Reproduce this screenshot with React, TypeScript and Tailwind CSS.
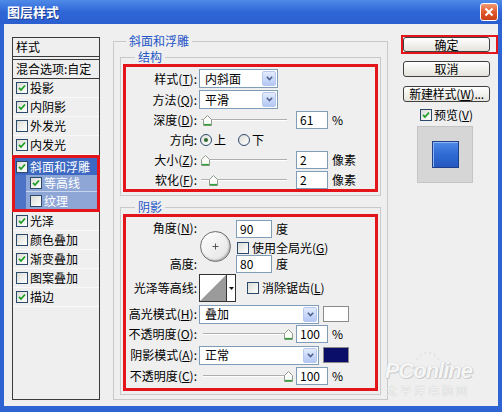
import React from 'react';

type Kid = { children?: React.ReactNode };

const Lbl = ({ t, k, colon = true }: { t: string; k?: string; colon?: boolean }) => (
  <span className="whitespace-nowrap">
    {t}
    {k && (
      <>
        (<span className="underline">{k}</span>)
      </>
    )}
    {colon && ':'}
  </span>
);

const Check = ({ on }: { on?: boolean }) => (
  <span className="flex h-[12px] w-[12px] shrink-0 items-center justify-center border border-[#2b4a6b] bg-linear-to-br from-[#dcdcd6] to-white">
    {on && (
      <svg width="8" height="8" viewBox="0 0 8 8">
        <path d="M1 3.8 L3 6 L7 1.5" stroke="#1f9e26" strokeWidth="1.8" fill="none" />
      </svg>
    )}
  </span>
);

const Radio = ({ on }: { on?: boolean }) => (
  <span className="flex h-[12px] w-[12px] shrink-0 items-center justify-center rounded-full border border-[#2b4a6b] bg-linear-to-br from-[#dcdcd6] to-white">
    {on && <span className="h-[4px] w-[4px] rounded-full bg-[#2d6a2d]" />}
  </span>
);

const Select = ({ value, w }: { value: string; w: string }) => (
  <div className={`flex h-[19px] ${w} items-center border border-[#7f9db9] bg-white`}>
    <span className="flex-1 pl-[5px]">{value}</span>
    <span className="mr-px flex h-[15px] w-[14px] items-center justify-center rounded-[2px] border border-[#b7c8ee] bg-linear-to-b from-[#e3ebfd] to-[#b4c8f4]">
      <svg width="7" height="5" viewBox="0 0 7 5">
        <path d="M0.8 0.8 L3.5 3.6 L6.2 0.8" stroke="#4a5f8c" strokeWidth="1.5" fill="none" />
      </svg>
    </span>
  </div>
);

const Field = ({ v, w = 'w-[32px]' }: { v: string; w?: string }) => (
  <div className={`flex h-[18px] ${w} shrink-0 items-center border border-[#7f9db9] bg-white pl-[3px]`}>{v}</div>
);

const Thumb = () => (
  <svg width="9" height="11" viewBox="0 0 9 11">
    <path d="M0.5 10.5 V4.5 L4.5 0.5 L8.5 4.5 V10.5 Z" fill="#fbfbf8" stroke="#8e9a8e" />
    <path d="M1 9.6 H8" stroke="#2ea236" strokeWidth="1.4" />
  </svg>
);

const Slider = ({ w, pos }: { w: string; pos: string }) => (
  <div className={`relative h-[18px] ${w} shrink-0`}>
    <div className="absolute inset-x-0 top-[8px] h-[2px] border-t border-b border-t-[#aeb0b0] border-b-white" />
    <div className={`absolute top-[4px] ${pos}`}>
      <Thumb />
    </div>
  </div>
);

const Row = ({ label, className = '', children }: { label: React.ReactNode; className?: string } & Kid) => (
  <div className={`flex items-center ${className}`}>
    <div className="w-[71px] shrink-0 text-right">{label}</div>
    {children}
  </div>
);

const Btn = ({ children }: Kid) => (
  <div className="flex h-[16px] w-[87px] items-center justify-center rounded-[3px] border border-[#404040] bg-linear-to-b from-white to-[#e4e3dc]">
    {children}
  </div>
);

const Item = ({ label, on }: { label: string; on?: boolean }) => (
  <div className="flex h-[19px] items-center gap-[2px] border-b border-[#fafafa] pl-[3px]">
    <Check on={on} />
    <span>{label}</span>
  </div>
);

const StyleList = () => (
  <div className="mt-[3px] flex h-[363px] w-[88px] shrink-0 flex-col border border-[#3a3a3a] bg-[#efefef]">
    <div className="flex h-[19px] items-center border-b border-[#3a3a3a] pl-[3px]">样式</div>
    <div className="mt-[2px] flex h-[20px] items-center border-y border-[#3a3a3a] pl-[3px]">混合选项:自定</div>
    <Item label="投影" on />
    <Item label="内阴影" on />
    <Item label="外发光" />
    <Item label="内发光" on />
    <div className="-mx-px border-[3px] border-[#e3151b]">
      <div className="flex h-[17px] items-center gap-[2px] bg-[#3d69c2] pl-px text-white">
        <Check on />
        <span>斜面和浮雕</span>
      </div>
      <div className="flex h-[17px] bg-[#4c73c6]">
        <div className="ml-[11px] flex flex-1 items-center gap-[2px] border-b border-[#c9d5ee] bg-[#8ea6d6] pl-[4px] text-white">
          <Check on />
          <span>等高线</span>
        </div>
      </div>
      <div className="flex h-[17px] bg-[#4c73c6]">
        <div className="ml-[11px] flex flex-1 items-center gap-[2px] bg-[#8ea6d6] pl-[4px] text-white">
          <Check />
          <span>纹理</span>
        </div>
      </div>
    </div>
    <Item label="光泽" on />
    <Item label="颜色叠加" />
    <Item label="渐变叠加" on />
    <Item label="图案叠加" />
    <Item label="描边" on />
  </div>
);

const Dial = () => (
  <div className="flex h-[31px] w-[31px] shrink-0 items-center justify-center rounded-full border border-[#707070] bg-linear-to-br from-white to-[#e2e2e2] shadow-[inset_-1px_-1px_2px_#a8a8a8]">
    <svg width="7" height="7" viewBox="0 0 7 7">
      <path d="M3.5 0.5 V6.5 M0.5 3.5 H6.5" stroke="#555" strokeWidth="1" />
    </svg>
  </div>
);

const Contour = () => (
  <div className="flex h-[28px] w-[37px] shrink-0 border border-[#333] bg-white">
    <svg width="26" height="26" viewBox="0 0 26 26">
      <path d="M0 26 L26 0 V26 Z" fill="#9b9b9b" />
    </svg>
    <div className="flex flex-1 items-center justify-center border-l border-[#333]">
      <svg width="5" height="3" viewBox="0 0 5 3">
        <path d="M0 0 H5 L2.5 3 Z" fill="#111" />
      </svg>
    </div>
  </div>
);

const Structure = () => (
  <fieldset className="mx-[6px] mt-[2px] border border-[#c9c9c9] pb-[3px]">
    <legend className="ml-[14px] px-[3px] leading-[14px] text-[#2456c6]">结构</legend>
    <div className="mx-[2px] flex flex-col gap-[2px] border-[3px] border-[#e3151b] pt-[2px]">
      <Row label={<Lbl t="样式" k="T" />} className="h-[19px]">
        <div className="ml-[2px]">
          <Select value="内斜面" w="w-[79px]" />
        </div>
      </Row>
      <Row label={<Lbl t="方法" k="Q" />} className="h-[19px]">
        <div className="ml-[2px]">
          <Select value="平滑" w="w-[79px]" />
        </div>
      </Row>
      <Row label={<Lbl t="深度" k="D" />} className="h-[18px]">
        <div className="ml-[4px] flex items-center">
          <Slider w="w-[86px]" pos="left-[2px]" />
          <div className="ml-[9px]">
            <Field v="61" />
          </div>
          <span className="ml-[4px]">%</span>
        </div>
      </Row>
      <Row label={<Lbl t="方向" />} className="h-[18px]">
        <div className="ml-[3px] flex items-center">
          <Radio on />
          <span className="ml-[2px]">上</span>
          <span className="ml-[12px]">
            <Radio />
          </span>
          <span className="ml-[2px]">下</span>
        </div>
      </Row>
      <Row label={<Lbl t="大小" k="Z" />} className="h-[18px]">
        <div className="ml-[4px] flex items-center">
          <Slider w="w-[86px]" pos="left-0" />
          <div className="ml-[9px]">
            <Field v="2" />
          </div>
          <span className="ml-[4px]">像素</span>
        </div>
      </Row>
      <Row label={<Lbl t="软化" k="F" />} className="h-[18px]">
        <div className="ml-[4px] flex items-center">
          <Slider w="w-[86px]" pos="left-[8px]" />
          <div className="ml-[9px]">
            <Field v="2" />
          </div>
          <span className="ml-[4px]">像素</span>
        </div>
      </Row>
    </div>
  </fieldset>
);

const Shadow = () => (
  <fieldset className="mx-[6px] mt-[4px] border border-[#c9c9c9] pb-[3px]">
    <legend className="ml-[14px] px-[3px] leading-[14px] text-[#2456c6]">阴影</legend>
    <div className="mx-[2px] flex flex-col border-[3px] border-[#e3151b] pb-[3px] pt-[3px]">
      <div className="flex h-[52px]">
        <div className="flex w-[71px] shrink-0 flex-col justify-between py-px text-right">
          <Lbl t="角度" k="N" />
          <span>高度:</span>
        </div>
        <div className="ml-[3px] mt-[11px]">
          <Dial />
        </div>
        <div className="ml-[5px] flex flex-col">
          <div className="flex items-center">
            <Field v="90" w="w-[36px]" />
            <span className="ml-[4px]">度</span>
          </div>
          <div className="mt-[4px] flex h-[12px] items-center gap-[3px] pl-px">
            <Check />
            <Lbl t="使用全局光" k="G" colon={false} />
          </div>
          <div className="mt-[1px] flex items-center">
            <Field v="80" w="w-[36px]" />
            <span className="ml-[4px]">度</span>
          </div>
        </div>
      </div>
      <Row label="光泽等高线:" className="mt-[2px] h-[28px]">
        <div className="ml-[2px]">
          <Contour />
        </div>
        <div className="ml-[11px] flex items-center gap-[3px]">
          <Check />
          <Lbl t="消除锯齿" k="L" colon={false} />
        </div>
      </Row>
      <Row label={<Lbl t="高光模式" k="H" />} className="mt-[3px] h-[18px]">
        <div className="ml-[2px]">
          <Select value="叠加" w="w-[120px]" />
        </div>
        <div className="ml-[4px] h-[16px] w-[26px] border border-[#8a8a8a] bg-white" />
      </Row>
      <Row label={<Lbl t="不透明度" k="O" />} className="mt-[2px] h-[18px]">
        <div className="ml-[6px] flex items-center">
          <Slider w="w-[89px]" pos="left-[81px]" />
          <div className="ml-[4px]">
            <Field v="100" />
          </div>
          <span className="ml-[4px]">%</span>
        </div>
      </Row>
      <Row label={<Lbl t="阴影模式" k="A" />} className="mt-[3px] h-[18px]">
        <div className="ml-[2px]">
          <Select value="正常" w="w-[120px]" />
        </div>
        <div className="ml-[4px] h-[16px] w-[26px] border border-[#8a8a8a] bg-[#0b0e69]" />
      </Row>
      <Row label={<Lbl t="不透明度" k="C" />} className="mt-[3px] h-[18px]">
        <div className="ml-[6px] flex items-center">
          <Slider w="w-[89px]" pos="left-[81px]" />
          <div className="ml-[4px]">
            <Field v="100" />
          </div>
          <span className="ml-[4px]">%</span>
        </div>
      </Row>
    </div>
  </fieldset>
);

const MainPanel = () => (
  <fieldset className="ml-[13px] h-[366px] w-[275px] shrink-0 border border-[#c9c9c9]">
    <legend className="ml-[12px] px-[3px] leading-[14px] text-[#2456c6]">斜面和浮雕</legend>
    <Structure />
    <Shadow />
  </fieldset>
);

const RightColumn = () => (
  <div className="ml-[13px] mt-[1px] flex w-[97px] shrink-0 flex-col">
    <div className="border-2 border-[#e3151b]">
      <div className="flex h-[15px] w-[87px] items-center justify-center rounded-[3px] border border-[#404040] bg-linear-to-b from-white to-[#e4e3dc]">
        确定
      </div>
    </div>
    <div className="ml-[2px] mt-[7px]">
      <Btn>取消</Btn>
    </div>
    <div className="ml-[2px] mt-[9px]">
      <Btn>
        <span className="whitespace-nowrap tracking-[-0.2px]">
          新建样式(<span className="underline">W</span>)...
        </span>
      </Btn>
    </div>
    <div className="ml-[19px] mt-[6px] flex h-[13px] items-center gap-[2px]">
      <Check on />
      <Lbl t="预览" k="V" colon={false} />
    </div>
    <div className="ml-[16px] mt-[5px] flex h-[57px] w-[56px] items-center justify-center border border-[#c4c4c4] bg-[#d6d6d6]">
      <div className="h-[27px] w-[27px] border border-[#1f3f8c] bg-linear-to-b from-[#4d8ae6] via-[#2f6ad3] to-[#2458c0] shadow-[inset_1px_1px_0_#8db6f2]" />
    </div>
  </div>
);

const Watermark = () => (
  <div className="pointer-events-none absolute bottom-[10px] right-[26px] flex flex-col items-center">
    <svg width="26" height="10" viewBox="0 0 26 10">
      <path d="M2 9 A12 12 0 0 1 24 9" stroke="#e4e4e4" strokeWidth="2" strokeDasharray="2 3" fill="none" />
    </svg>
    <span className="font-['Liberation_Sans',sans-serif] text-[22px] font-bold italic leading-[20px] tracking-[-1px] text-[#f6f6f6] [text-shadow:0_0_1px_#b4b4b4,1px_1px_0_#d0d0d0]">
      PConline
    </span>
    <span className="mt-[3px] text-[11px] leading-[12px] tracking-[3px] text-[#f6f6f6] [text-shadow:0_0_1px_#b4b4b4]">
      太平洋电脑网
    </span>
  </div>
);

const TitleBar = () => (
  <div className="flex h-[24px] shrink-0 items-center justify-between bg-linear-to-b from-[#4f8ae8] via-[#2f66d6] to-[#2b5fcf] pl-[7px] pr-[4px]">
    <span className="text-[13px] font-bold leading-[16px] text-white [text-shadow:1px_1px_0_#1b3f95]">图层样式</span>
    <div className="flex h-[18px] w-[18px] items-center justify-center rounded-[3px] border border-white bg-linear-to-b from-[#f19a72] via-[#e1582c] to-[#c93f18]">
      <svg width="10" height="10" viewBox="0 0 10 10">
        <path d="M1.5 1.5 L8.5 8.5 M8.5 1.5 L1.5 8.5" stroke="#fff" strokeWidth="2" />
      </svg>
    </div>
  </div>
);

export default function App() {
  return (
    <div className="flex h-[412px] w-[502px] flex-col bg-[#2e63d3] font-['Noto_Sans_CJK_SC','Noto_Sans',sans-serif] text-[12px] leading-[14px] text-black">
      <TitleBar />
      <div className="relative mx-[4px] mb-[6px] flex flex-1 bg-[#efefef] pl-[8px] pt-[10px]">
        <StyleList />
        <MainPanel />
        <RightColumn />
        <Watermark />
      </div>
    </div>
  );
}
